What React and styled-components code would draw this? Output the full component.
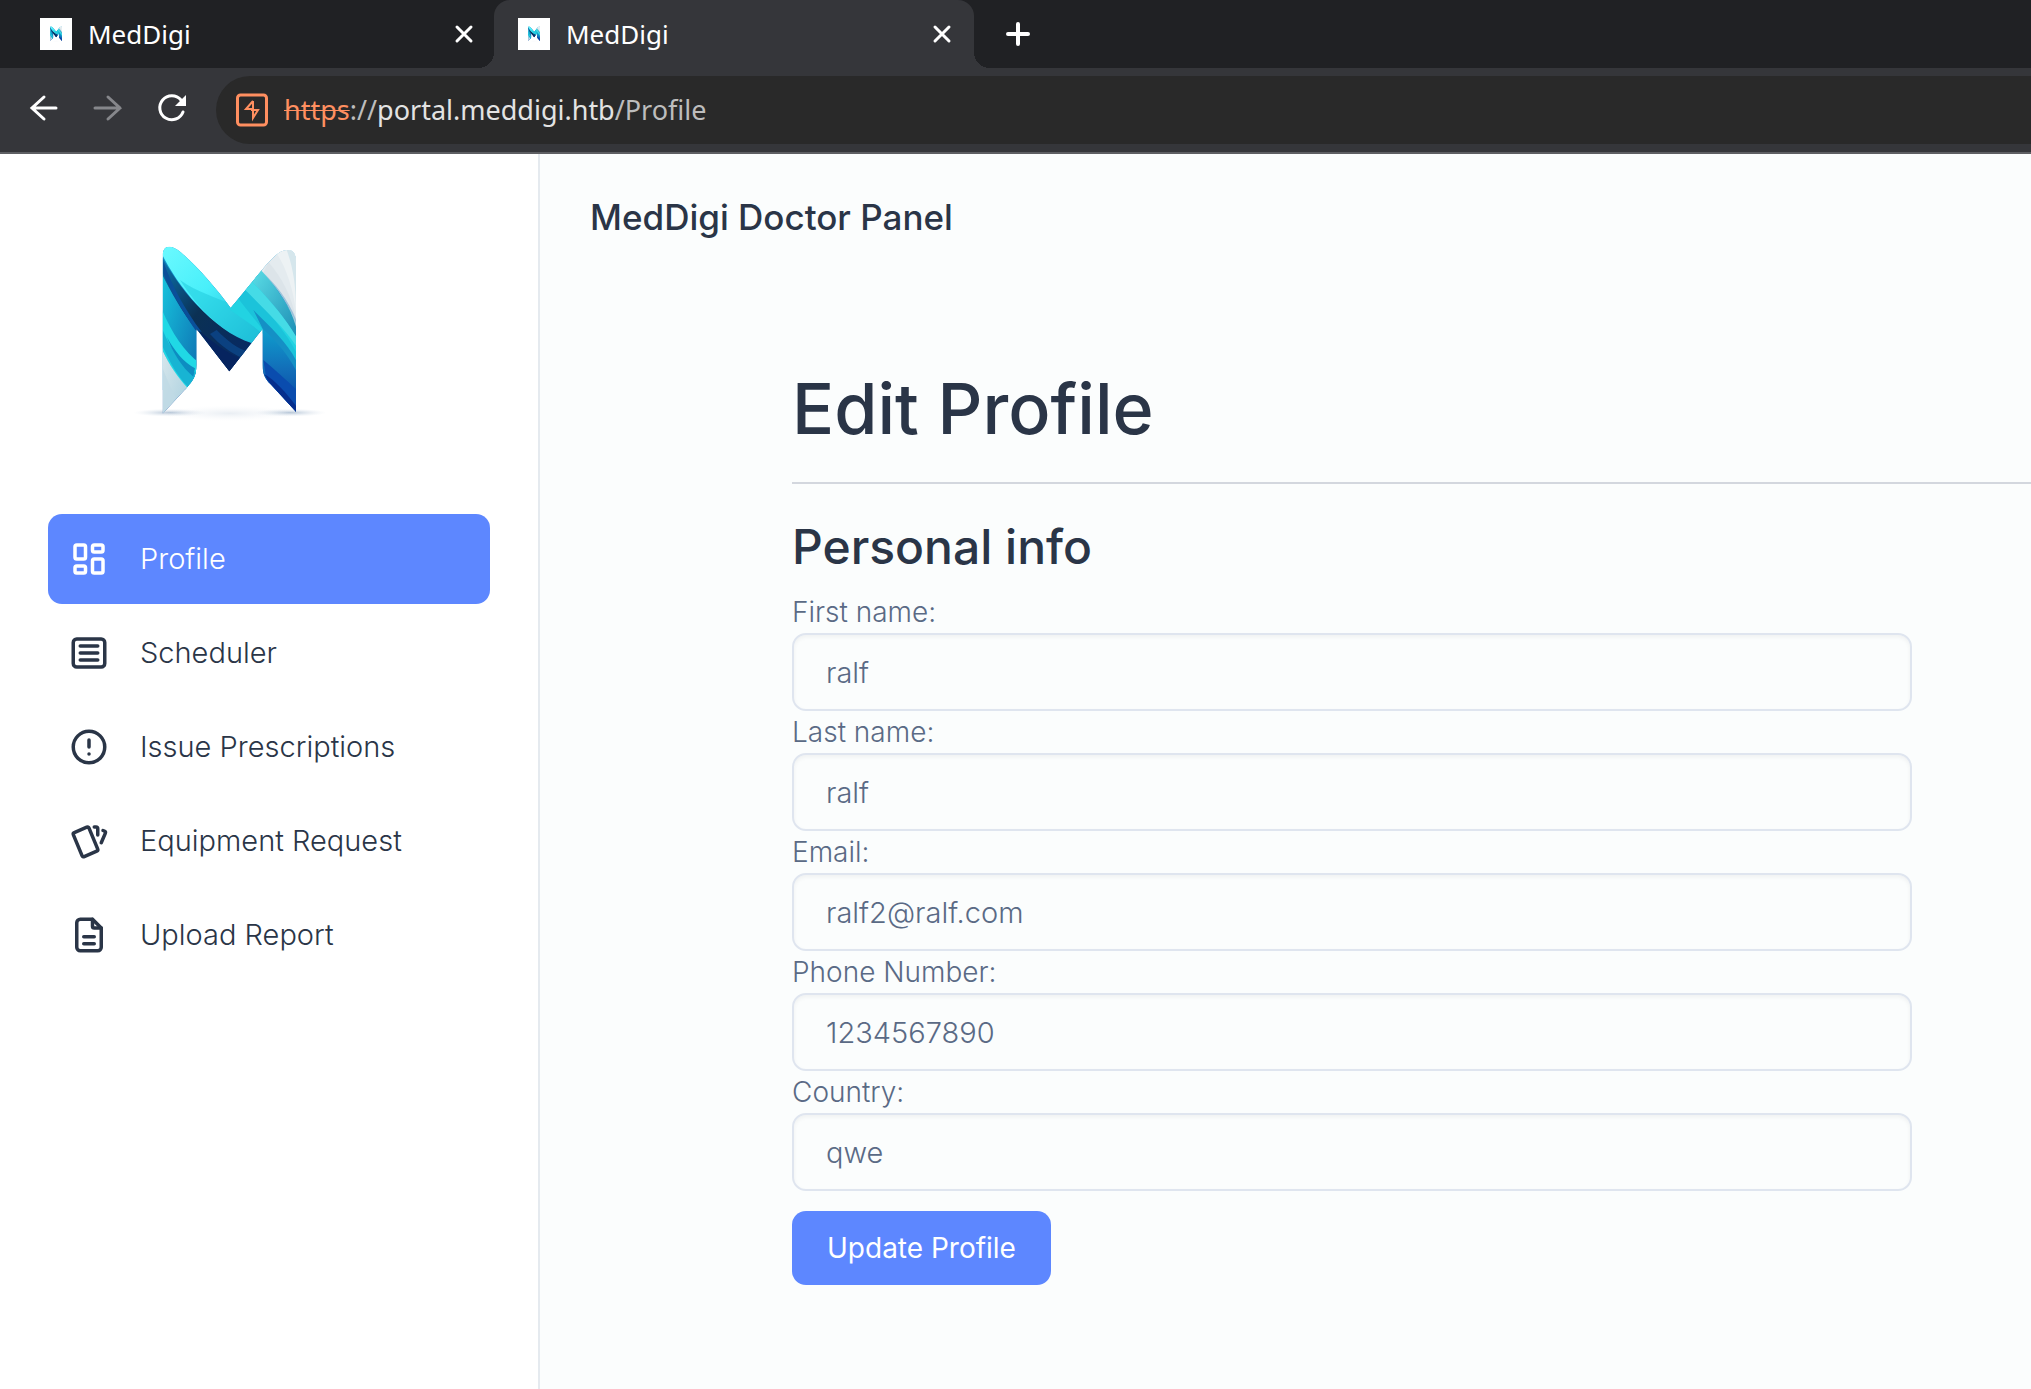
import React, { useId, useState } from 'react';
import styled, { createGlobalStyle } from 'styled-components';
import { TbAlertCircle, TbArticle, TbCards, TbFileDescription, TbLayoutDashboard } from 'react-icons/tb';

const GlobalStyle = createGlobalStyle`
    * {
        box-sizing: border-box;
    }

    body {
        margin: 0;
        background: #fbfdfd;
        color: #5a6a85;
        font: 300 28px/42px Inter, 'Open Sans', sans-serif;
    }

    button,
    input {
        font: inherit;
    }
`;

const Page = styled.div`
    display: flex;
    flex-direction: column;
    min-height: 100vh;
`;

const TabStrip = styled.div`
    display: flex;
    height: 68px;
    padding-left: 16px;
    background: #202124;
    font: 400 26px/36px 'Noto Sans', sans-serif;
`;

const Tab = styled.div`
    position: relative;
    display: flex;
    align-items: center;
    width: ${props => props.$active ? 480 : 478}px;
    padding: 0 ${props => props.$active ? 20 : 18}px 0 24px;
    color: #fff;

    ${props => props.$active && `
        background: #35363a;
        border-radius: 16px 16px 0 0;

        &::before,
        &::after {
            content: '';
            position: absolute;
            bottom: 0;
            width: 16px;
            height: 16px;
        }
        &::before {
            left: -16px;
            background: radial-gradient(circle at 0 0, transparent 16px, #35363a 16px);
        }
        &::after {
            right: -16px;
            background: radial-gradient(circle at 100% 0, transparent 16px, #35363a 16px);
        }
    `}
`;

const TabTitle = styled.span`
    flex: 1;
    padding-left: 16px;
`;

const IconButton = styled.button`
    display: flex;
    padding: 0;
    border: 0;
    background: none;
    color: #fff;

    &:disabled {
        color: #86878b;
    }
`;

const NewTab = styled(IconButton)`
    align-self: center;
    margin-left: 32px;
`;

const Toolbar = styled.div`
    display: flex;
    align-items: center;
    gap: 32px;
    height: 86px;
    padding-left: 32px;
    background: #35363a;
    border-bottom: 2px solid #5e5f63;
`;

const NavButtons = styled.div`
    display: flex;
    gap: 40px;
    padding-bottom: 4px;
`;

const AddressBar = styled.div`
    display: flex;
    flex: 1;
    align-items: center;
    gap: 16px;
    height: 68px;
    padding-left: 20px;
    border-radius: 34px 0 0 34px;
    background: #292929;
    color: #bdbdbd;
    font: 400 27px/36px 'Noto Sans', sans-serif;

    s {
        color: #ff8f60;
        text-decoration-thickness: 1px;
    }
    b {
        color: #e3e3e3;
        font-weight: 400;
    }
`;

const Body = styled.div`
    display: flex;
    flex: 1;
`;

const Sidebar = styled.aside`
    flex: none;
    width: 540px;
    padding: 0 48px;
    background: #fff;
    border-right: 2px solid #e5eaef;
`;

const Brand = styled.a`
    display: block;
    width: 360px;
    height: 360px;
`;

const Menu = styled.nav`
    display: flex;
    flex-direction: column;
    gap: 4px;
    font-size: 29px;
`;

const MenuLink = styled.a`
    display: flex;
    align-items: center;
    gap: 30px;
    height: 90px;
    padding: 0 20px;
    border-radius: 14px;
    background: ${props => props.$active ? '#5d87ff' : 'transparent'};
    color: ${props => props.$active ? '#fff' : '#2a3547'};
    text-decoration: none;
    white-space: nowrap;

    svg {
        flex: none;
    }
`;

const Main = styled.main`
    flex: 1;
    min-width: 0;
`;

const PanelTitle = styled.h5`
    margin: 0;
    padding: 41px 50px 39px;
    color: #2a3547;
    font-weight: 500;
    font-size: 35px;
    line-height: 44px;
`;

const Content = styled.div`
    padding: 84px 0 0 252px;
`;

const Title = styled.h1`
    margin: 0;
    padding-bottom: 26px;
    border-bottom: 2px solid #d3d7de;
    color: #2a3547;
    font-weight: 500;
    font-size: 70px;
    line-height: 94px;
`;

const SectionTitle = styled.h2`
    margin: 0;
    padding: 31px 0 12px;
    color: #2a3547;
    font-weight: 500;
    font-size: 48px;
    line-height: 64px;
`;

const Form = styled.form`
    max-width: 1120px;
`;

const Label = styled.label`
    display: block;
`;

const Input = styled.input`
    display: block;
    width: 100%;
    height: 78px;
    padding: 0 32px;
    border: 2px solid #dfe5ef;
    border-radius: 14px;
    outline: 0;
    background: transparent;
    box-shadow: inset 0 2px 4px rgba(0, 0, 0, .05);
    color: #5a6a85;
    font-size: 29px;
`;

const SubmitButton = styled.button`
    height: 74px;
    margin-top: 20px;
    padding: 0 35px;
    border: 0;
    border-radius: 14px;
    background: #5d87ff;
    color: #fff;
    font-weight: 400;
`;

const Logo = ({ size = 360 }) => {
    const id = useId();

    return (
        <svg width={size} height={size} viewBox='-216 -228 1080 1080' aria-hidden='true'>
            <defs>
                <clipPath id={`${id}m`}>
                    <path d='M128 78C128 45 152 42 184 68C235 112 285 170 332 234L424 122C452 88 478 60 502 60C520 60 528 72 528 98V545L452 463C434 445 428 432 428 405V296L328 424L229 296V405C229 440 219 451 200 473L128 551Z' />
                </clipPath>
                <linearGradient id={`${id}a`} x1='0' y1='0' x2='1' y2='1'>
                    <stop offset='0' stopColor='#6dfaff' />
                    <stop offset='.45' stopColor='#48effa' />
                    <stop offset='1' stopColor='#15a9ce' />
                </linearGradient>
                <linearGradient id={`${id}b`} x1='0' y1='0' x2='1' y2='1'>
                    <stop offset='0' stopColor='#0b78b6' />
                    <stop offset='.45' stopColor='#0b3154' />
                    <stop offset='1' stopColor='#062766' />
                </linearGradient>
                <linearGradient id={`${id}c`} x1='0' y1='0' x2='0' y2='1'>
                    <stop offset='0' stopColor='#0f9fce' />
                    <stop offset='.45' stopColor='#126fb9' />
                    <stop offset='1' stopColor='#063a9c' />
                </linearGradient>
                <linearGradient id={`${id}d`} x1='0' y1='0' x2='1' y2='1'>
                    <stop offset='0' stopColor='#18c9df' />
                    <stop offset='1' stopColor='#0d6cb0' />
                </linearGradient>
                <linearGradient id={`${id}e`} x1='0' y1='0' x2='1' y2='1'>
                    <stop offset='0' stopColor='#dce9ee' />
                    <stop offset='1' stopColor='#a7cedd' />
                </linearGradient>
                <linearGradient id={`${id}f`} x1='0' y1='0' x2='1' y2='1'>
                    <stop offset='0' stopColor='#5bdde6' />
                    <stop offset='1' stopColor='#1c8db4' />
                </linearGradient>
                <radialGradient id={`${id}s`}>
                    <stop offset='0' stopColor='#9eb3ca' stopOpacity='.75' />
                    <stop offset='1' stopColor='#dfe7ef' stopOpacity='0' />
                </radialGradient>
            </defs>
            <ellipse cx='150' cy='548' rx='110' ry='12' fill={`url(#${id}s)`} />
            <ellipse cx='510' cy='548' rx='110' ry='12' fill={`url(#${id}s)`} />
            <ellipse cx='330' cy='550' rx='200' ry='24' fill={`url(#${id}s)`} opacity='.3' />
            <g clipPath={`url(#${id}m)`}>
                <rect x='120' y='40' width='420' height='520' fill={`url(#${id}c)`} />
                {/* left leg */}
                <path d='M120 120C150 180 185 250 232 300V480H120Z' fill={`url(#${id}d)`} />
                <path d='M120 225C150 300 190 365 240 400V480H200C160 425 138 390 120 340Z' fill='#20d8e5' />
                <path d='M128 300C150 355 185 402 232 432L205 472C165 430 145 385 128 350Z' fill='#18b4d3' />
                <path d='M140 320C165 365 190 395 225 415L220 440C185 410 160 370 140 320Z' fill='#0d8dc1' />
                <path d='M120 345C145 400 170 440 205 476L120 570Z' fill={`url(#${id}e)`} />
                <path d='M128 415C140 445 152 475 168 505L128 551Z' fill='#bfdae5' opacity='.8' />
                {/* dark fold */}
                <path d='M120 70C170 160 250 280 400 340L328 430L226 296C180 235 145 170 120 120Z' fill={`url(#${id}b)`} />
                <path d='M130 95C155 165 195 240 245 306L226 300C185 240 150 180 130 130Z' fill='#0a4f99' />
                <path d='M235 300C275 335 320 368 360 385L328 430Z' fill='#06245f' />
                <path d='M290 300C325 335 350 355 388 366L368 384C330 368 300 345 270 312Z' fill='#0b4180' />
                {/* bright band */}
                <path d='M120 60C160 150 270 300 396 340L440 286L300 190L170 40H120Z' fill={`url(#${id}a)`} />
                <path d='M180 150C230 185 290 205 345 225L430 290L396 338C300 305 235 235 180 150Z' fill='#20cadd' opacity='.55' />
                {/* right arm */}
                <path d='M328 238L424 120C470 175 515 240 530 285V420C490 350 430 310 328 238Z' fill='#22d3e2' />
                <path d='M355 206L385 170C430 235 505 310 530 370V440C490 370 420 290 355 206Z' fill='#1bc3da' />
                <path d='M400 240C450 290 505 340 530 395V460C485 400 450 350 428 296Z' fill='#1590c5' />
                <path d='M428 296C460 325 500 365 530 425V560L428 450Z' fill={`url(#${id}c)`} />
                <path d='M396 155L424 120C470 175 515 240 530 285V325C500 270 450 210 396 155Z' fill={`url(#${id}f)`} />
                <path d='M376 180L396 155C450 210 500 270 530 322V350C490 290 430 235 376 180Z' fill='#45dbe6' />
                <path d='M430 390C465 420 500 450 530 480V555L440 452Z' fill='#0a4cae' />
                <path d='M432 432C465 450 500 490 530 530V550L450 460Z' fill='#062e8d' />
                {/* white tip */}
                <path d='M424 122V40H535V290C515 220 470 165 424 122Z' fill='#e4ebef' />
                <path d='M445 96C485 140 515 200 528 265V290C510 225 475 180 430 128Z' fill='#d9e1e7' opacity='.7' />
                <path d='M470 70C500 115 520 180 528 245V50H485Z' fill='#edf2f4' />
                <path d='M500 60C518 110 528 160 528 245V60Z' fill='#d5e6ec' />
            </g>
        </svg>
    );
};

const Favicon = styled.span`
    display: flex;
    background: #fff;
`;

const CloseIcon = () => (
    <svg width='24' height='24' viewBox='0 0 24 24' stroke='currentColor' strokeWidth='3' strokeLinecap='round'>
        <path d='M5 5l14 14M19 5L5 19' />
    </svg>
);

const PlusIcon = () => (
    <svg width='24' height='24' viewBox='0 0 24 24' stroke='currentColor' strokeWidth='4' strokeLinecap='round'>
        <path d='M12 2v20M2 12h20' />
    </svg>
);

const ArrowIcon = ({ forward }) => (
    <svg width='24' height='26' viewBox='0 0 24 26' fill='none' stroke='currentColor' strokeWidth='3' strokeLinecap='round' overflow='visible'>
        <path d={forward ? 'M-1 13H24M12 2L24 13L12 24' : 'M24 13H0M12 2L0 13L12 24'} />
    </svg>
);

const ReloadIcon = () => (
    <svg width='24' height='26' viewBox='0 0 24 26' fill='none' overflow='visible'>
        <path d='M23 17A12 12 0 1 1 21 5' stroke='currentColor' strokeWidth='3' strokeLinecap='round' />
        <path d='M26 0V11H15Z' fill='currentColor' />
    </svg>
);

const BurpIcon = () => (
    <svg width='32' height='34' viewBox='0 0 32 34' fill='none' stroke='#ff8f60' aria-hidden='true'>
        <rect x='1.5' y='2' width='29' height='30' rx='3' strokeWidth='3' />
        <path d='M17 8L10 16H17V8M15 17H22L17 25V17' strokeWidth='2' />
    </svg>
);

const menuItems = [
    { label: 'Profile', icon: TbLayoutDashboard, active: true },
    { label: 'Scheduler', icon: TbArticle },
    { label: 'Issue Prescriptions', icon: TbAlertCircle },
    { label: 'Equipment Request', icon: TbCards },
    { label: 'Upload Report', icon: TbFileDescription }
];

const fields = [
    { name: 'firstName', label: 'First name:', value: 'ralf' },
    { name: 'lastName', label: 'Last name:', value: 'ralf' },
    { name: 'email', label: 'Email:', value: 'ralf2@ralf.com' },
    { name: 'phone', label: 'Phone Number:', value: '1234567890' },
    { name: 'country', label: 'Country:', value: 'qwe' }
];

const BrowserTab = ({ active }) => (
    <Tab $active={active}>
        <Favicon><Logo size={32} /></Favicon>
        <TabTitle>MedDigi</TabTitle>
        <IconButton aria-label='Close tab'><CloseIcon /></IconButton>
    </Tab>
);

const ProfileForm = () => {
    const [values, setValues] = useState(
        Object.fromEntries(fields.map(({ name, value }) => [name, value]))
    );

    return (
        <Form onSubmit={e => e.preventDefault()}>
            {fields.map(({ name, label }) => (
                <div key={name}>
                    <Label htmlFor={name}>{label}</Label>
                    <Input
                        id={name}
                        value={values[name]}
                        onChange={e => setValues({ ...values, [name]: e.target.value })}
                    />
                </div>
            ))}
            <SubmitButton type='submit'>Update Profile</SubmitButton>
        </Form>
    );
};

const App = () => (
    <Page>
        <GlobalStyle />
        <TabStrip>
            <BrowserTab />
            <BrowserTab active />
            <NewTab aria-label='New tab'><PlusIcon /></NewTab>
        </TabStrip>
        <Toolbar>
            <NavButtons>
                <IconButton aria-label='Back'><ArrowIcon /></IconButton>
                <IconButton aria-label='Forward' disabled><ArrowIcon forward /></IconButton>
                <IconButton aria-label='Reload'><ReloadIcon /></IconButton>
            </NavButtons>
            <AddressBar>
                <BurpIcon />
                <span><s>https</s>://<b>portal.meddigi.htb</b>/Profile</span>
            </AddressBar>
        </Toolbar>
        <Body>
            <Sidebar>
                <Brand href='#' aria-label='MedDigi'><Logo /></Brand>
                <Menu>
                    {menuItems.map(({ label, icon: Icon, active }) => (
                        <MenuLink href='#' key={label} $active={active}>
                            <Icon size={42} />
                            {label}
                        </MenuLink>
                    ))}
                </Menu>
            </Sidebar>
            <Main>
                <PanelTitle>MedDigi Doctor Panel</PanelTitle>
                <Content>
                    <Title>Edit Profile</Title>
                    <SectionTitle>Personal info</SectionTitle>
                    <ProfileForm />
                </Content>
            </Main>
        </Body>
    </Page>
);

export default App;
